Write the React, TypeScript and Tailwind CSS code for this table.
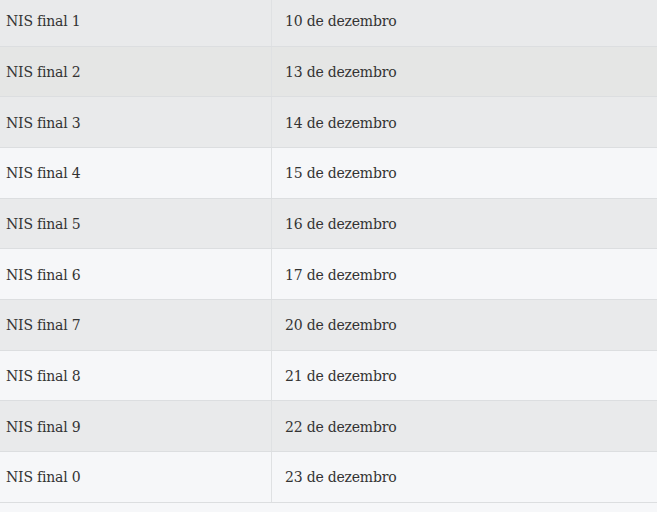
// Calendário de pagamento por final do NIS — tabela zebrada
const rows = [
  { nis: 'NIS final 1', date: '10 de dezembro', tone: 'gray' },
  { nis: 'NIS final 2', date: '13 de dezembro', tone: 'hover' },
  { nis: 'NIS final 3', date: '14 de dezembro', tone: 'gray' },
  { nis: 'NIS final 4', date: '15 de dezembro', tone: 'light' },
  { nis: 'NIS final 5', date: '16 de dezembro', tone: 'gray' },
  { nis: 'NIS final 6', date: '17 de dezembro', tone: 'light' },
  { nis: 'NIS final 7', date: '20 de dezembro', tone: 'gray' },
  { nis: 'NIS final 8', date: '21 de dezembro', tone: 'light' },
  { nis: 'NIS final 9', date: '22 de dezembro', tone: 'gray' },
  { nis: 'NIS final 0', date: '23 de dezembro', tone: 'light' },
]

const toneClass = {
  gray: 'bg-[#e9eaeb]',
  hover: 'bg-[#e5e6e5]',
  light: 'bg-[#f6f7f9]',
}

export default function App() {
  return (
    <div className="min-h-[512px] w-[657px] overflow-hidden bg-[#f6f7f9] font-['DejaVu_Serif'] text-[14px] tracking-[-0.2px] text-[#333]">
      <div className="-mt-[4px]">
        {rows.map((r) => (
          <div
            key={r.nis}
            className={`grid h-[50.67px] grid-cols-[272px_1fr] border-b border-[#dcdee0] ${toneClass[r.tone as keyof typeof toneClass]}`}
          >
            <div className="flex items-center border-r border-[#dfe1e3] pl-[6px] pt-[2px]">{r.nis}</div>
            <div className="flex items-center pl-[13px] pt-[2px]">{r.date}</div>
          </div>
        ))}
      </div>
    </div>
  )
}
